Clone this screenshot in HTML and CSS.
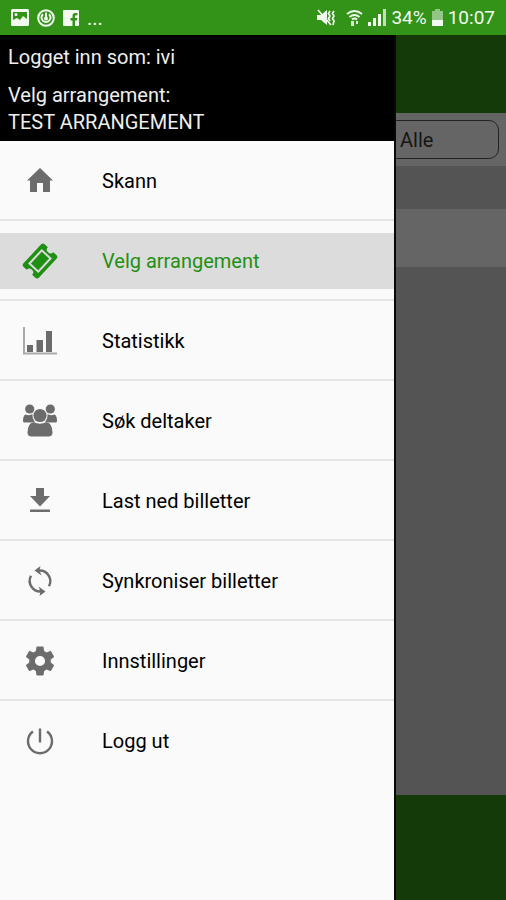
FILE: index.html
```html
<!DOCTYPE html>
<html lang="no">
<head>
<meta charset="utf-8">
<meta name="viewport" content="width=device-width, initial-scale=1">
<title>Velg arrangement</title>
<link rel="stylesheet" href="styles.css">
</head>
<body>
<div class="screen">
  <header class="status">
    <div class="status-group">
      <svg class="status-icon" width="18" height="18" viewBox="0 0 18 18" aria-hidden="true"><path fill="currentColor" fill-rule="evenodd" d="M1.500 0h15q1.500 0 1.500 1.500v14q0 1.500-1.500 1.500h-15q-1.500 0-1.500-1.500v-14q0-1.500 1.500-1.500zM2 3v8l4-2 3 2 3-4 4 3V3z"/><circle cx="5" cy="5.500" r="1.500" fill="currentColor"/></svg>
      <svg class="status-icon" width="18" height="18" viewBox="0 0 18 18" aria-hidden="true"><g fill="none" stroke="currentColor" stroke-width="2"><circle cx="9" cy="9" r="7.800"/><path d="M9 3.500v5M12 5.200a4.500 4.500 0 1 1-6 0"/></g><circle cx="9" cy="9.500" r="2" fill="currentColor"/></svg>
      <svg class="status-icon" width="16" height="16" viewBox="0 0 16 16" aria-hidden="true"><path fill="currentColor" d="M1 0h14q1 0 1 1v14q0 1-1 1h-3v-5.500h2l.4-2.500H12V6.500q0-1.200 1.200-1.200h1.200V3h-2Q9.500 3 9.500 6v2h-2v2.500h2V16H1q-1 0-1-1V1q0-1 1-1z"/></svg>
      <span class="more">...</span>
    </div>
    <div class="status-group status-right">
      <svg class="mute" width="18" height="18" viewBox="0 0 18 18" aria-hidden="true"><path fill="currentColor" d="M0 6h4l6-5v15l-6-5H0z"/><path d="M1 1l13 15M13 2l-1.500 2.500L13 7l-1.500 2.500L13 12M17 2l-1.500 2.500L17 7l-1.500 2.500L17 12l-1 4" fill="none" stroke="currentColor" stroke-width="1.700"/></svg>
      <svg width="17" height="18" viewBox="0 0 17 18" aria-hidden="true"><path d="M1 5q7.500-6 15 0M3.500 8q5-4 10 0M6 10.500q2.500-2 5 0" fill="none" stroke="currentColor" stroke-width="2"/><path d="M5 12h3v5H5zM10 12h2v3h-2z" fill="currentColor" opacity=".85"/></svg>
      <svg width="18" height="17" viewBox="0 0 18 17" aria-hidden="true"><g fill="currentColor"><path d="M0 13h3v4H0zM5 9h3v8H5zM10 5h3v12h-3z"/><path d="M15 0h3v17h-3z" opacity=".75"/></g></svg>
      <span>34%</span>
      <svg width="11" height="18" viewBox="0 0 11 18" aria-hidden="true"><path d="M3 0h5v2h3v9H0V2h3z" fill="currentColor" opacity=".5"/><path d="M0 11h11v6H0z" fill="currentColor"/></svg>
      <time>10:07</time>
    </div>
  </header>
  <div class="app">
    <main class="page">
      <div class="appbar"></div>
      <div class="filter"><select class="filter-select" aria-label="Filter"><option>Alle</option></select></div>
      <div class="list-head"></div>
      <div class="list-row"></div>
      <div class="list-space"></div>
      <div class="bottombar"></div>
    </main>
    <aside class="drawer">
      <div class="account">
        <p class="user">Logget inn som: ivi</p>
        <p>Velg arrangement:</p>
        <p>TEST ARRANGEMENT</p>
      </div>
      <nav>
        <ul class="menu">
          <li><a class="item" href="#"><svg class="icon" viewBox="0 0 36 36" aria-hidden="true"><path fill="currentColor" d="M18 5L31 17.500H28V29H21V20H15V29H8V17.500H5z"/></svg>Skann</a></li>
          <li><a class="item active" href="#" aria-current="page"><svg class="icon" viewBox="0 0 36 36" aria-hidden="true"><g transform="rotate(-47 18 18)"><path fill="currentColor" d="M5 7.500h26q2.500 0 2.500 2.500V14.300a3.700 3.700 0 0 0 0 7.400V26q0 2.500-2.500 2.500H5q-2.500 0-2.500-2.500V21.700a3.700 3.700 0 0 0 0-7.400V10q0-2.500 2.500-2.500z"/><path d="M9 12h18v12h-18z" fill="none" stroke="#dcdcdc" stroke-width="2"/></g></svg>Velg arrangement</a></li>
          <li><a class="item" href="#"><svg class="icon" viewBox="0 0 36 36" aria-hidden="true"><path d="M2 4v26.500h33" fill="none" stroke="#aaa" stroke-width="2"/><path fill="currentColor" d="M5 22h6v7H5zM14.500 17h6.500v12h-6.500zM24 8h6v21h-6z"/></svg>Statistikk</a></li>
          <li><a class="item" href="#"><svg class="icon" viewBox="0 0 36 36" aria-hidden="true"><g fill="currentColor"><circle cx="7.700" cy="6" r="4.600"/><circle cx="28.300" cy="6" r="4.600"/><path d="M3.500 11.500Q7.500 13 10.500 11Q10 15.500 13 18.500L9 19.500H2.500Q1 19.500 1 18Q1 12.500 3.500 11.500zM32.500 11.500Q28.500 13 25.500 11Q26 15.500 23 18.500L27 19.500H33.500Q35 19.500 35 18Q35 12.500 32.500 11.500z"/><circle cx="18" cy="12.500" r="6.600"/><path d="M11.500 19Q18 22.500 24.500 19Q30.500 20.500 30.500 29.500Q30.500 33.500 26.500 33.500H9.500Q5.500 33.500 5.500 29.500Q5.500 20.500 11.500 19z"/></g></svg>Søk deltaker</a></li>
          <li><a class="item" href="#"><svg class="icon" viewBox="0 0 36 36" aria-hidden="true"><path fill="currentColor" d="M14 5h8v8h6L18 23.500 8 13h6zM8 26.500h20v2.500H8z"/></svg>Last ned billetter</a></li>
          <li><a class="item" href="#"><svg class="icon" viewBox="0 0 36 36" aria-hidden="true"><g fill="none" stroke="currentColor" stroke-width="2.400"><path d="M16 7.700a10.600 10.600 0 0 1 11 15.500M20 28.300a10.600 10.600 0 0 1-11-15.500"/></g><path fill="currentColor" d="M12.500 7.500L18.500 3L17.500 7.500L19.500 12.500zM23.500 28.500L17.500 33L18.500 28.500L16.500 23.500z"/></svg>Synkroniser billetter</a></li>
          <li><a class="item" href="#"><svg class="icon" viewBox="0 0 24 24" aria-hidden="true"><path fill="currentColor" d="M19.140 12.940c.04-.3.06-.61.06-.94 0-.32-.02-.64-.07-.94l2.030-1.580c.18-.14.23-.41.120-.61l-1.920-3.320c-.12-.22-.37-.29-.59-.22l-2.390.96c-.5-.38-1.030-.7-1.620-.94l-.36-2.540c-.04-.24-.24-.41-.48-.41h-3.840c-.24 0-.43.17-.47.41l-.36 2.540c-.59.24-1.130.57-1.620.94l-2.390-.96c-.22-.08-.47 0-.59.22L2.740 8.870c-.12.210-.08.470.120.610l2.030 1.580c-.05.300-.09.630-.09.940s.02.640.07.940l-2.030 1.580c-.18.140-.23.410-.12.610l1.920 3.320c.12.220.37.290.59.220l2.390-.96c.5.380 1.030.700 1.620.940l.36 2.540c.05.240.24.410.48.410h3.840c.24 0 .44-.17.47-.41l.36-2.540c.59-.24 1.130-.56 1.620-.94l2.390.96c.22.080.47 0 .59-.22l1.920-3.320c.12-.22.070-.47-.12-.61l-2.010-1.580zM12 15.400a3.400 3.400 0 1 1 0-6.800 3.400 3.400 0 0 1 0 6.800z"/></svg>Innstillinger</a></li>
          <li><a class="item" href="#"><svg class="icon" viewBox="0 0 36 36" aria-hidden="true"><path d="M18 5.500V19.500M11 8.500a12 12 0 1 0 14 0" fill="none" stroke="currentColor" stroke-width="2.400"/></svg>Logg ut</a></li>
        </ul>
      </nav>
    </aside>
  </div>
</div>
</body>
</html>
```
FILE: styles.css
```css
* { box-sizing: border-box; }

body {
  margin: 0;
  font-family: Roboto, "Liberation Sans", sans-serif;
  font-size: 20px;
  color: #111;
}

p, ul { margin: 0; padding: 0; }

.screen {
  display: flex;
  flex-direction: column;
  min-height: 100vh;
}

.status {
  display: flex;
  justify-content: space-between;
  align-items: center;
  height: 35px;
  padding: 0 11px;
  background: #339319;
  color: #f2faef;
}

.status-group {
  display: flex;
  align-items: center;
  gap: 8px;
}

.status-right { gap: 5px; font-size: 19px; }
.mute { margin-right: 6px; }
.more { line-height: 24px; }

.app {
  position: relative;
  display: flex;
  flex: 1;
}

.page {
  display: flex;
  flex: 1;
  flex-direction: column;
  background: #545454;
}

.appbar { height: 78px; background: #153a0a; }

.filter {
  display: flex;
  justify-content: flex-end;
  padding: 7px;
  background: #656565;
}

.filter-select {
  width: 120px;
  height: 39px;
  padding: 0 20px;
  border: 1px solid #222;
  border-radius: 10px;
  appearance: none;
  background: transparent;
  color: #161616;
  font: inherit;
}

.list-head { height: 43px; }
.list-row { height: 58px; background: #656565; }
.list-space { flex: 1; }
.bottombar { height: 105px; background: #153a0a; }

.drawer {
  position: absolute;
  inset: 0 110px 0 0;
  border-right: 2px solid #080808;
  background: #fafafa;
}

.account {
  height: 106px;
  padding: 9px 8px;
  background: #000;
  color: #eee;
  line-height: 27px;
}

.user { margin-bottom: 11px; }

.menu { list-style: none; }

.menu li {
  padding: 12px 0 10px;
  border-bottom: 2px solid #e4e4e4;
}

.menu li:last-child { border-bottom: 0; }

.item {
  display: flex;
  align-items: center;
  gap: 44px;
  height: 56px;
  padding: 0 22px;
  color: #000;
  text-decoration: none;
}

.active { background: #dcdcdc; color: #1f9013; }

.icon { width: 36px; height: 36px; color: #6c6c6c; }
.active .icon { color: #1f9013; }
```
